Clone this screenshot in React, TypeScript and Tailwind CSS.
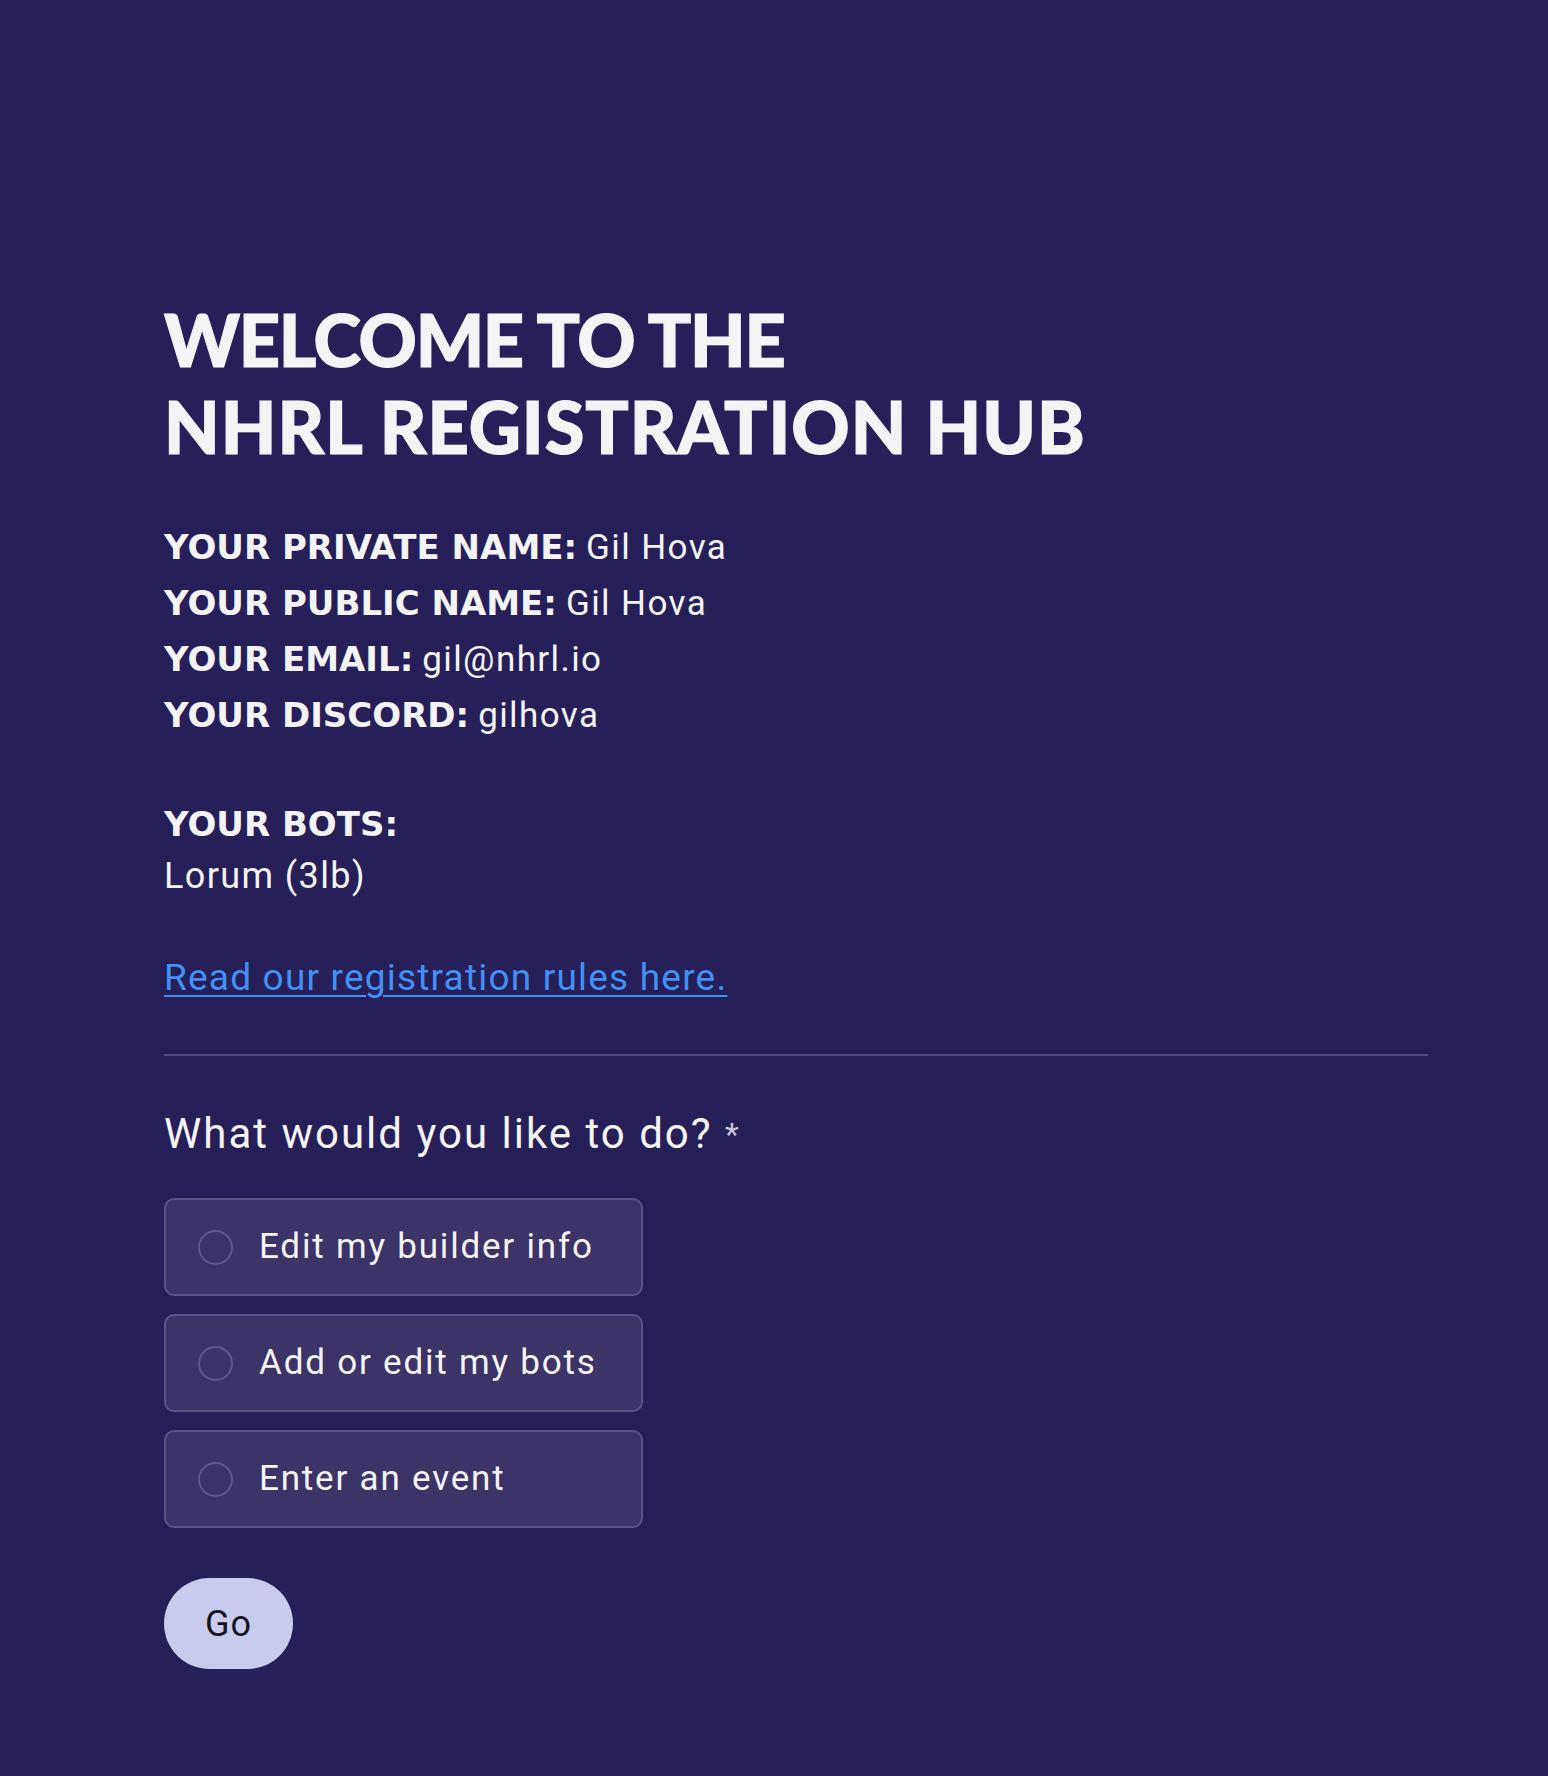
import React from "react";

const heading = { fontFamily: "Lato, 'Liberation Sans', sans-serif" };
const label = { fontFamily: "'DejaVu Sans', 'Liberation Sans', sans-serif" };
const body = { fontFamily: "Roboto, 'Liberation Sans', sans-serif" };

function Info({ name, value }: { name: string; value: string }) {
  return (
    <div className="flex h-[56px] items-center whitespace-nowrap">
      <div className="flex items-baseline">
        <span className="text-[34px] font-bold leading-[40px]" style={label}>{name}</span>
        <span className="ml-[9px] text-[35px] leading-[40px] tracking-[1.4px]" style={body}>{value}</span>
      </div>
    </div>
  );
}

function Option({ text }: { text: string }) {
  return (
    <label className="flex h-[98px] w-[479px] items-center rounded-[10px] border-2 border-[#5b5287] bg-[#3c3369] pl-[32px] cursor-pointer">
      <span className="h-[35px] w-[35px] shrink-0 rounded-full border-2 border-[#5d5590]" />
      <span className="ml-[26px] text-[35px] tracking-[1.8px] text-[#f4f4f4]" style={body}>{text}</span>
    </label>
  );
}

export default function App() {
  return (
    <div className="min-h-[1776px] w-full bg-[#271f59] text-[#f4f4f4]">
      <div className="w-[1264px] pl-[164px] pt-[296px] box-content">
        <h1 className="text-[72px] font-black leading-[87px] [-webkit-text-stroke:1.2px_#f4f4f4]" style={heading}>
          <span className="block tracking-[-1.3px]">WELCOME TO THE</span>
          <span className="block tracking-[1px]">NHRL REGISTRATION HUB</span>
        </h1>
        <div className="mt-[49px]">
          <Info name="YOUR PRIVATE NAME:" value="Gil Hova" />
          <Info name="YOUR PUBLIC NAME:" value="Gil Hova" />
          <Info name="YOUR EMAIL:" value="gil@nhrl.io" />
          <Info name="YOUR DISCORD:" value="gilhova" />
        </div>
        <div className="mt-[55px] leading-[52px]">
          <div className="text-[34px] font-bold" style={label}>YOUR BOTS:</div>
          <div className="text-[36px] tracking-[1.4px]" style={body}>Lorum (3lb)</div>
        </div>
        <div className="mt-[50px] text-[37px] leading-[52px] tracking-[1.2px]" style={body}>
          <a href="#" className="text-[#4390f2] underline underline-offset-[5px] decoration-2">
            Read our registration rules here.
          </a>
        </div>
        <div className="mt-[50px] h-[2px] w-[1264px] bg-[#4f4882]" />
        <div className="mt-[50px] text-[42px] leading-[56px] tracking-[2px]" style={body}>
          What would you like to do? <span className="text-[#c9c9d6] text-[32px] align-top">*</span>
        </div>
        <div className="mt-[36px] flex flex-col gap-[18px]">
          <Option text="Edit my builder info" />
          <Option text="Add or edit my bots" />
          <Option text="Enter an event" />
        </div>
        <button
          className="mt-[50px] h-[91px] w-[129px] rounded-full bg-[#c9cbec] text-[36px] tracking-[1px] text-[#15151f]"
          style={body}
        >
          Go
        </button>
      </div>
    </div>
  );
}
